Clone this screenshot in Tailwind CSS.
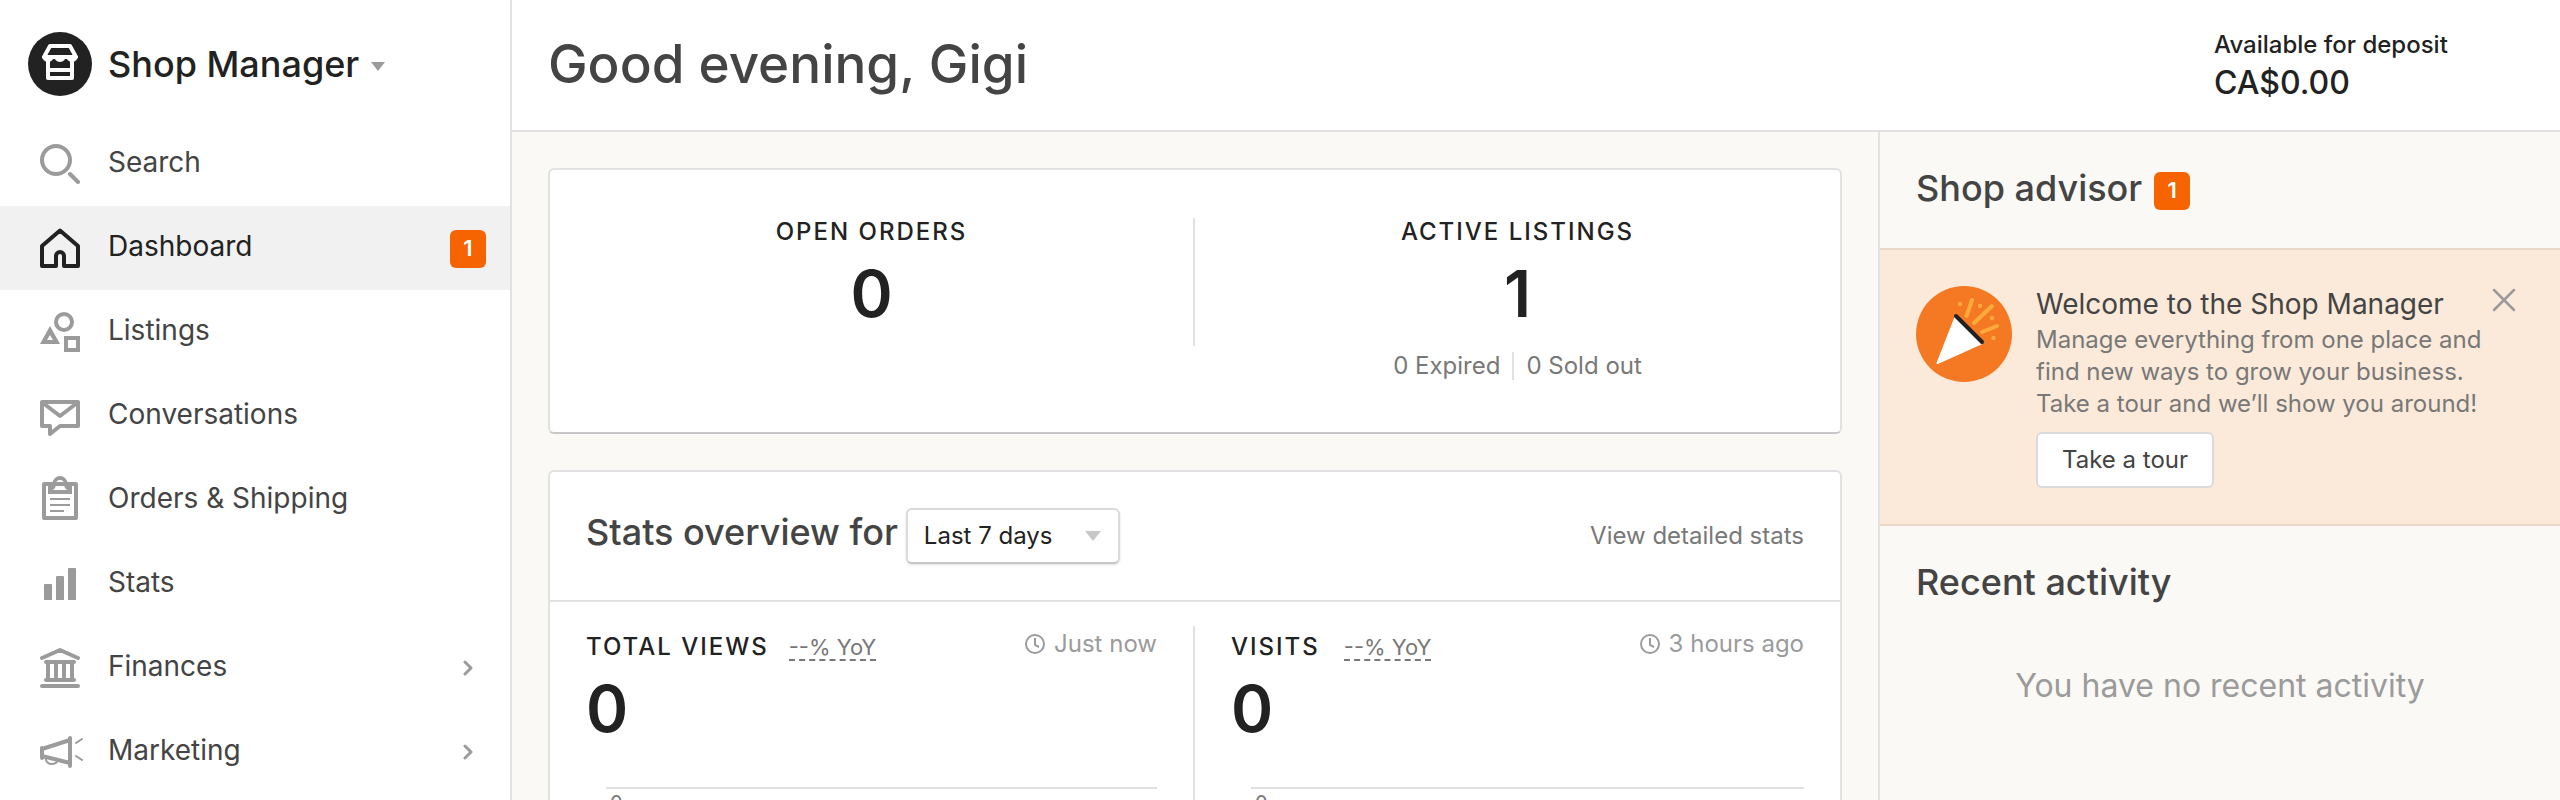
<!DOCTYPE html>
<html lang="en">
<head>
<meta charset="utf-8">
<meta name="viewport" content="width=device-width, initial-scale=1">
<title>Shop Manager</title>
<script src="https://cdn.jsdelivr.net/npm/@tailwindcss/browser@4"></script>
</head>
<body class="flex h-screen overflow-hidden bg-[#faf9f5] font-['Inter','Liberation_Sans',sans-serif] text-2xl text-[#222]">

<aside class="w-[512px] shrink-0 border-r-2 border-[#e1e1e1] bg-white">
  <button type="button" class="flex h-[122px] w-full items-center gap-4 pl-7 pt-[6px] text-left">
    <svg class="size-16 shrink-0" viewBox="0 0 64 64" aria-hidden="true">
      <circle cx="32" cy="32" r="32" fill="#222"/>
      <g fill="none" stroke="#fff" stroke-width="4" stroke-linejoin="round">
        <path d="M22 14H42L48 25H16Z"/>
        <path d="M20 29V46H44V29M20 38H44"/>
      </g>
      <path fill="#fff" d="M14 24a6 6 0 0 0 12 0 6 6 0 0 0 12 0 6 6 0 0 0 12 0Z"/>
    </svg>
    <span class="flex items-center gap-3">
      <span class="text-4xl font-medium">Shop Manager</span>
      <svg class="mt-1 h-[9px] w-[14px]" viewBox="0 0 14 9" aria-hidden="true"><path d="M0 0H14L7 9Z" fill="#9b9b9b"/></svg>
    </span>
  </button>

  <nav aria-label="Main">
    <ul class="text-[28px] text-[#444]">
      <li><a href="#search" class="flex h-[84px] items-center gap-7 pl-10 pr-6">
        <svg class="size-10 shrink-0" viewBox="0 0 40 40" fill="none" stroke="#9b9b9b" stroke-width="4" stroke-linecap="round" aria-hidden="true"><circle cx="16" cy="16" r="14"/><path d="M30 30L38 38"/></svg>
        <span class="pb-[2px]">Search</span></a></li>
      <li><a href="#dashboard" aria-current="page" class="flex h-[84px] items-center gap-7 bg-[#f1f1f1] pl-10 pr-6 text-[#222]">
        <svg class="size-10 shrink-0" viewBox="0 0 40 40" fill="none" stroke="#222" stroke-width="4" stroke-linejoin="round" aria-hidden="true"><path d="M2 38V18L20 2.500 38 18V38H24V28a4 4 0 0 0-8 0V38Z"/></svg>
        <span class="grow pb-[2px]">Dashboard</span>
        <span class="mt-[2px] flex h-[38px] w-9 items-center justify-center rounded-md bg-[#f56400] text-[22px] font-semibold text-white">1</span></a></li>
      <li><a href="#listings" class="flex h-[84px] items-center gap-7 pl-10 pr-6">
        <svg class="size-10 shrink-0" viewBox="0 0 40 40" aria-hidden="true"><circle cx="24" cy="10" r="8" fill="none" stroke="#9b9b9b" stroke-width="4"/><path fill="#9b9b9b" fill-rule="evenodd" d="M10 14L20 32H0ZM10 23L7 28H13Z"/><rect x="26" y="26" width="12" height="12" fill="none" stroke="#9b9b9b" stroke-width="4"/></svg>
        <span class="pb-[2px]">Listings</span></a></li>
      <li><a href="#conversations" class="flex h-[84px] items-center gap-7 pl-10 pr-6">
        <svg class="size-10 shrink-0" viewBox="0 0 40 40" fill="none" stroke="#9b9b9b" stroke-width="4" stroke-linejoin="round" aria-hidden="true"><path d="M2 6H38V30H20L10 38V30H2Z"/><path d="M3 7L20 20 37 7"/></svg>
        <span class="pb-[2px]">Conversations</span></a></li>
      <li><a href="#orders" class="flex h-[84px] items-center gap-7 pl-10 pr-6">
        <svg class="size-10 shrink-0 overflow-visible" viewBox="0 0 40 40" fill="none" stroke="#9b9b9b" aria-hidden="true"><rect x="4" y="4" width="32" height="34" stroke-width="4" stroke-linejoin="round"/><path fill="#9b9b9b" stroke="none" fill-rule="evenodd" d="M8 14V6Q12.500 6 12.500 3.500A7.500 7.500 0 0 1 27.500 3.500Q27.500 6 32 6V14ZM12 10H28Q24 9 24 4A4 4 0 0 0 16 4Q16 9 12 10Z"/><circle cx="20" cy="3" r="1" fill="#9b9b9b" stroke="none"/><path d="M10 19H30M10 25H30M10 31H24" stroke-width="2"/></svg>
        <span class="pb-[2px]">Orders &amp; Shipping</span></a></li>
      <li><a href="#stats" class="flex h-[84px] items-center gap-7 pl-10 pr-6">
        <svg class="size-10 shrink-0" viewBox="0 0 40 40" fill="#9b9b9b" aria-hidden="true"><path d="M4 36V21q0-1 1-1h6q1 0 1 1V36ZM16 36V13q0-1 1-1h6q1 0 1 1V36ZM28 36V5q0-1 1-1h6q1 0 1 1V36Z"/></svg>
        <span class="pb-[2px]">Stats</span></a></li>
      <li><a href="#finances" class="flex h-[84px] items-center gap-7 pl-10 pr-[37px]">
        <svg class="size-10 shrink-0" viewBox="0 0 40 40" fill="none" stroke="#9b9b9b" stroke-width="4" stroke-linecap="round" stroke-linejoin="round" aria-hidden="true"><path d="M2 10L20 2 38 10M6 14H34M6 32H34M2 38H38M8 15V31M16 15V31M24 15V31M32 15V31"/></svg>
        <span class="grow pb-[2px]">Finances</span>
        <svg class="h-4 w-[10px]" viewBox="0 0 10 16" fill="none" stroke="#9b9b9b" stroke-width="3" stroke-linecap="round" stroke-linejoin="round" aria-hidden="true"><path d="M2 2L8 8 2 14"/></svg></a></li>
      <li><a href="#marketing" class="flex h-[84px] items-center gap-7 pl-10 pr-[37px]">
        <svg class="size-10 shrink-0 overflow-visible" viewBox="0 0 40 40" fill="none" stroke="#9b9b9b" stroke-width="4" stroke-linecap="round" aria-hidden="true"><path d="M2 16V26M30 6V34M2 17L30 8M2 24L30 31"/><path stroke-width="2" d="M6 26a6 5 0 0 0 12 2M36 11L42 7M36 24L42 28"/></svg>
        <span class="grow pb-[2px]">Marketing</span>
        <svg class="h-4 w-[10px]" viewBox="0 0 10 16" fill="none" stroke="#9b9b9b" stroke-width="3" stroke-linecap="round" stroke-linejoin="round" aria-hidden="true"><path d="M2 2L8 8 2 14"/></svg></a></li>
    </ul>
  </nav>
</aside>

<div class="flex min-w-0 grow flex-col">
  <header class="flex h-[132px] shrink-0 items-center justify-between border-b-2 border-[#e1e1e1] bg-white pl-9">
    <h1 class="pb-[2px] text-[53px] font-medium text-[#444]">Good evening, Gigi</h1>
    <div class="w-[346px] font-medium">
      <p class="leading-9">Available for deposit</p>
      <p class="text-[32px] leading-10">CA$0.00</p>
    </div>
  </header>

  <div class="flex min-h-0 grow">
    <main class="flex min-w-0 grow flex-col gap-9 p-9">
      <section class="grid shrink-0 grid-cols-2 rounded-md border-2 border-[#e1e1e1] border-b-[#c8c8c8] bg-white pb-[52px] pt-12 text-center">
        <div class="h-32 border-r-2 border-[#e1e1e1]">
          <h2 class="leading-7 font-medium tracking-[2px]">OPEN ORDERS</h2>
          <p class="mt-3 text-[64px] leading-[72px] font-semibold">0</p>
        </div>
        <div>
          <h2 class="leading-7 font-medium tracking-[2px]">ACTIVE LISTINGS</h2>
          <p class="mt-3 text-[64px] leading-[72px] font-semibold">1</p>
          <p class="mt-[22px] flex justify-center leading-7 text-[#787878]"><a href="#expired" class="border-r-2 border-[#e1e1e1] pr-3">0 Expired</a><a href="#sold-out" class="pl-3">0 Sold out</a></p>
        </div>
      </section>

      <section class="shrink-0 rounded-md border-2 border-[#e1e1e1] bg-white">
        <div class="flex h-[130px] items-center justify-between border-b-2 border-[#e1e1e1] px-9">
          <div class="flex items-center gap-2">
            <label for="range" class="pb-2 text-4xl font-medium text-[#444]">Stats overview for</label>
            <span class="relative">
              <select id="range" class="h-14 w-[214px] appearance-none rounded-md border-2 border-[#dadada] border-b-[#c8c8c8] bg-white pl-4 shadow-sm"><option>Last 7 days</option><option>Last 30 days</option></select>
              <svg class="pointer-events-none absolute right-[19px] top-[23px] h-[10px] w-4" viewBox="0 0 16 10" aria-hidden="true"><path d="M0 0H16L8 10Z" fill="#c8c8c8"/></svg>
            </span>
          </div>
          <a href="#detailed" class="text-[#787878]">View detailed stats</a>
        </div>
        <div class="grid grid-cols-2 pt-6">
          <div class="border-r-2 border-[#e1e1e1] px-9 pt-[2px]">
            <div class="flex items-baseline">
              <h3 class="font-medium tracking-[2px]">TOTAL VIEWS</h3>
              <button type="button" class="ml-5 border-b-2 border-dashed border-[#787878] text-[22px] leading-6 text-[#787878]">--% YoY</button>
              <p class="ml-auto flex items-center gap-2 text-[#9b9b9b]"><svg class="size-[22px]" viewBox="0 0 22 22" fill="none" stroke="#9b9b9b" stroke-width="2" aria-hidden="true"><circle cx="11" cy="11" r="9"/><path d="M11 5V12L15 14"/></svg>Just now</p>
            </div>
            <p class="mt-[10px] text-[64px] leading-[72px] font-semibold">0</p>
            <div class="ml-5 mt-[42px] h-52 border-t-2 border-[#e1e1e1] pl-1 text-xl leading-7 text-[#787878]">0</div>
          </div>
          <div class="px-9 pt-[2px]">
            <div class="flex items-baseline">
              <h3 class="font-medium tracking-[2px]">VISITS</h3>
              <button type="button" class="ml-6 border-b-2 border-dashed border-[#787878] text-[22px] leading-6 text-[#787878]">--% YoY</button>
              <p class="ml-auto flex items-center gap-2 text-[#9b9b9b]"><svg class="size-[22px]" viewBox="0 0 22 22" fill="none" stroke="#9b9b9b" stroke-width="2" aria-hidden="true"><circle cx="11" cy="11" r="9"/><path d="M11 5V12L15 14"/></svg>3 hours ago</p>
            </div>
            <p class="mt-[10px] text-[64px] leading-[72px] font-semibold">0</p>
            <div class="ml-5 mt-[42px] h-52 border-t-2 border-[#e1e1e1] pl-1 text-xl leading-7 text-[#787878]">0</div>
          </div>
        </div>
      </section>
    </main>

    <aside class="w-[682px] shrink-0 border-l-2 border-[#e1e1e1]">
      <div class="flex h-[116px] items-center gap-3 pl-9">
        <h2 class="pb-1 text-4xl font-medium text-[#444]">Shop advisor</h2>
        <span class="mt-[2px] flex h-[38px] w-9 items-center justify-center rounded-md bg-[#f56400] text-[22px] font-semibold text-white">1</span>
      </div>
      <section class="flex h-[278px] items-start border-y-2 border-[#e8d8c8] bg-[#fbead9] pl-9 pr-11 pt-9">
        <svg class="size-24 shrink-0" viewBox="0 0 96 96" aria-hidden="true">
          <circle cx="48" cy="48" r="48" fill="#f57823"/>
          <path d="M39.500 31L66 57 21.500 77Z" fill="#fff" stroke="#fff" stroke-width="2" stroke-linejoin="round"/>
          <path d="M40 30L66 56" stroke="#222" stroke-width="4" stroke-linecap="round"/>
          <path d="M56 14L50.500 30M76 20L58 37M81 40L66 46" stroke="#ffaa3c" stroke-width="4" stroke-linecap="round"/>
          <g fill="#ffaa3c"><circle cx="44" cy="18" r="2.200"/><circle cx="64" cy="20" r="2.200"/><circle cx="76" cy="32" r="2.200"/><circle cx="77.500" cy="52" r="2.200"/></g>
        </svg>
        <div class="ml-6 grow">
          <h3 class="text-[28px] leading-9 text-[#444]">Welcome to the Shop Manager</h3>
          <p class="mt-[2px] leading-8 text-[#787878]">Manage everything from one place and<br>find new ways to grow your business.<br>Take a tour and we’ll show you around!</p>
          <button type="button" class="mt-3 h-14 rounded-md border-2 border-[#d8dadc] bg-white px-6 text-[#444]">Take a tour</button>
        </div>
        <button type="button" aria-label="Close" class="-ml-10 mt-[2px] shrink-0"><svg class="size-6" viewBox="0 0 24 24" stroke="#9b9b9b" stroke-width="2.500" stroke-linecap="round" aria-hidden="true"><path d="M2 2L22 22M22 2L2 22"/></svg></button>
      </section>
      <h2 class="pl-9 pt-9 text-4xl font-medium text-[#444]">Recent activity</h2>
      <p class="pt-[60px] text-center text-[32px] leading-12 text-[#9b9b9b]">You have no recent activity</p>
    </aside>
  </div>
</div>
</body>
</html>
